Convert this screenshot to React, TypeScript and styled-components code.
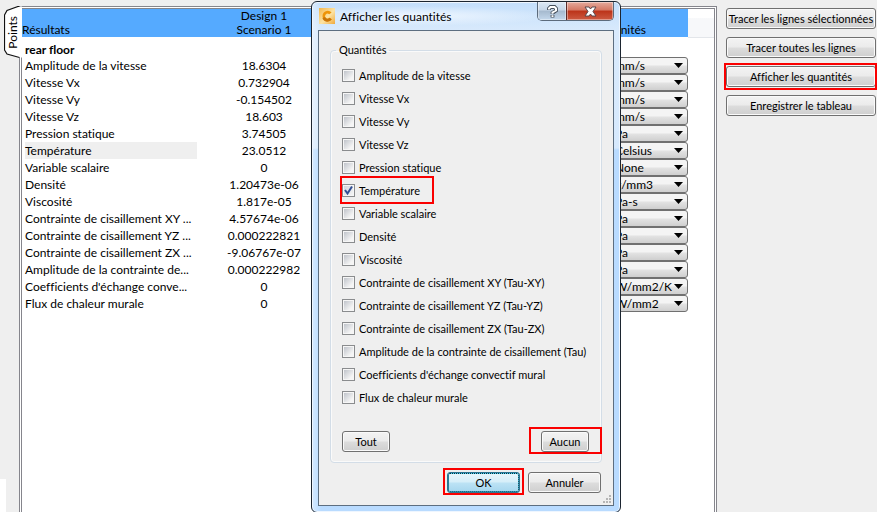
import React from "react";
import styled, { createGlobalStyle, css } from "styled-components";

const GlobalStyle = createGlobalStyle`
  * { box-sizing: border-box; }
  body {
    margin: 0;
    background: #efefef;
    color: #000;
    font-family: Lato, "Liberation Sans", sans-serif;
    font-size: 11px;
    font-variant-ligatures: none;
  }
`;

const Page = styled.div`
  position: relative;
  display: flex;
  min-height: 100vh;
  overflow: hidden;
`;

/* Left rail with the vertical tab */
const Rail = styled.div`
  display: flex;
  flex-direction: column;
  width: 19px;
  flex: none;
  padding-top: 6px;
`;

const Tab = styled.button`
  position: relative;
  z-index: 1;
  display: flex;
  align-items: center;
  justify-content: center;
  width: 18px;
  height: 53px;
  margin-left: 4px;
  padding: 0;
  border: 0;
  background: none;
  font: inherit;
  color: inherit;
`;

const TabShape = styled.svg`
  position: absolute;
  inset: 0;
`;

const TabLabel = styled.span`
  position: relative;
  writing-mode: vertical-rl;
  transform: rotate(180deg);
  font-size: 12px;
  line-height: 16px;
`;

const RailFoot = styled.div`
  width: 6px;
  height: 33px;
  margin-top: auto;
  background: #fff;
`;

/* Results panel */
const Panel = styled.main`
  flex: 1;
  min-width: 0;
  margin-top: 6px;
  padding: 1px 1px 0;
  border: 1px solid #85858c;
  border-bottom: 0;
  background: #fff;
`;

const PanelInner = styled.div`
  height: 100%;
  border: 1px solid #85858c;
  border-bottom: 0;
`;

const Results = styled.table`
  width: 100%;
  table-layout: fixed;
  border-collapse: collapse;
  font-size: 12px;
  line-height: 14px;
`;

const Col = styled.col<{ $w?: number }>`
  ${(p) => p.$w && css`width: ${p.$w}px;`}
`;

const Head = styled.th<{ $center?: boolean }>`
  height: 28px;
  padding: 0;
  background: #55aaff;
  font-weight: 400;
  vertical-align: bottom;
  text-align: ${(p) => (p.$center ? "center" : "left")};
`;

const HeadLine = styled.span`
  display: block;
  height: 14px;
  overflow: hidden;
`;

const HeadRest = styled(Head)`
  background: linear-gradient(#fff 0 33%, #f7f8fa 34%);
  border-bottom: 1px solid #e3e6ea;
`;

const GroupName = styled.th`
  height: 20px;
  padding: 5px 0 0 3px;
  font-weight: 700;
  text-align: left;
`;

const Name = styled.th<{ $active?: boolean }>`
  height: 17px;
  padding: 0;
  font-weight: 400;
  text-align: left;
  ${(p) => p.$active && css`
    background: linear-gradient(#efefef, #efefef) 3px 0 / 172px 100% no-repeat;
  `}
`;

const NameText = styled.span`
  display: block;
  padding-left: 3px;
  white-space: nowrap;
`;

const Value = styled.td`
  padding: 0;
  text-align: center;
`;

const Cell = styled.td`
  padding: 0;
`;

const UnitBox = styled.div`
  position: relative;
  display: flex;
  align-items: center;
  height: 17px;
  border: 1px solid #707070;
  border-radius: 3px;
  background: linear-gradient(#f4f4f4 0 45%, #e2e2e2 55%, #cfcfcf);
`;

const UnitSelect = styled.select`
  appearance: none;
  width: 100%;
  height: 15px;
  padding: 0 0 0 2px;
  border: 0;
  background: none;
  color: #000;
  font: inherit;
  line-height: 15px;
`;

const Arrow = styled.svg`
  position: absolute;
  right: 4px;
  top: 5px;
  pointer-events: none;
`;

/* Right column */
const Side = styled.aside`
  display: flex;
  flex-direction: column;
  gap: 8px;
  width: 160px;
  flex: none;
  padding: 8px 1px 0 9px;
`;

const Button = styled.button<{ $w?: number; $primary?: boolean }>`
  height: 21px;
  width: ${(p) => (p.$w ? p.$w + "px" : "100%")};
  padding: 0 0 1px;
  border: 1px solid #707070;
  border-radius: 3px;
  background: linear-gradient(#f3f3f3 0, #ebebeb 49%, #dddddd 51%, #cfcfcf);
  box-shadow: inset 0 0 0 1px #fafafa;
  color: #000;
  font: inherit;
  white-space: nowrap;
  ${(p) => p.$primary && css`
    border-color: #2f7390;
    background: linear-gradient(#eaf6fb 0, #d5eef9 49%, #bde3f5 51%, #a6d6ee);
    box-shadow: inset 0 0 0 1px #45d0f5;
    outline: 1px dotted #10303c;
    outline-offset: -2px;
  `}
`;

/* Red frame laid over a control; $i holds the reach past each side */
const Marked = styled.div<{ $i: string }>`
  position: relative;
  display: flex;
  &::after {
    content: "";
    position: absolute;
    inset: ${(p) => p.$i};
    border: 2px solid #fa0000;
    pointer-events: none;
  }
`;

/* Dialog window */
const Dialog = styled.section`
  position: absolute;
  z-index: 2;
  top: 1px;
  left: 311px;
  width: 310px;
  display: flex;
  flex-direction: column;
  padding: 0 6px 6px;
  border: 1px solid #1c2530;
  border-radius: 6px;
  background: linear-gradient(90deg, #ffffff66, #ffffff00 3%), linear-gradient(#c4dffb 0, #d9eafc 30px, #d6e9fd 146px, #b9dbff 148px);
  box-shadow: inset 0 0 0 1px #eef6ff;
`;

const TitleBar = styled.header`
  display: flex;
  align-items: center;
  gap: 5px;
  height: 28px;
  padding-left: 1px;
  background: radial-gradient(ellipse at 34% 50%, #eef6ff, #eef6ff00 50%);
`;

const Title = styled.h1`
  flex: 1;
  margin: 0;
  font-size: 12px;
  font-weight: 400;
`;

const WindowButtons = styled.div`
  display: flex;
  align-self: flex-start;
  height: 19px;
  border: 1px solid #5c6b7c;
  border-top: 0;
  border-radius: 0 0 5px 5px;
  overflow: hidden;
`;

const WindowButton = styled.button<{ $close?: boolean }>`
  display: flex;
  align-items: center;
  justify-content: center;
  width: ${(p) => (p.$close ? 47 : 28)}px;
  padding: 0;
  border: 0;
  border-left: ${(p) => (p.$close ? "1px solid #5b2a28" : "0")};
  background: ${(p) =>
    p.$close
      ? "linear-gradient(#e5aa9c 0, #d47763 45%, #bc3319 50%, #cc5a41 100%)"
      : "linear-gradient(#dce8f4 0, #c6d6e7 45%, #a5b9ce 50%, #c4d8ec 100%)"};
  box-shadow: inset 0 0 0 1px #ffffff66;
`;

const Client = styled.div`
  position: relative;
  display: flex;
  flex-direction: column;
  padding: 12px 11px 0;
  border: 1px solid #5d6e80;
  background: #efefef;
`;

const Group = styled.fieldset`
  min-width: 0;
  margin: 0;
  padding: 7px 12px 10px 11px;
  border: 1px solid #d3dde7;
  border-radius: 4px;
  box-shadow: inset 0 0 0 1px #fafafa;
`;

const Legend = styled.legend`
  margin-left: -6px;
  padding: 0 3px;
  line-height: 14px;
`;

const Check = styled.label`
  display: flex;
  align-items: center;
  gap: 4px;
  height: 23px;
  white-space: nowrap;
`;

const Box = styled.input`
  appearance: none;
  width: 13px;
  height: 13px;
  margin: 0;
  border: 1px solid #8a8c8e;
  background: linear-gradient(135deg, #c0c4cb, #f5f5f5 80%) content-box, #f6f6f6;
  padding: 1px;
  &:checked {
    background: url("data:image/svg+xml,%3Csvg xmlns='http://www.w3.org/2000/svg' viewBox='0 0 11 11'%3E%3Cpath d='M2 5l2.500 3.500L9 1.500' fill='none' stroke='%23324f94' stroke-width='2'/%3E%3C/svg%3E"),
      linear-gradient(135deg, #d2d6dd, #f5f5f5) content-box, #f6f6f6;
  }
`;

const GroupActions = styled.div`
  display: flex;
  justify-content: space-between;
  margin-top: 22px;
`;

const Footer = styled.footer`
  display: flex;
  justify-content: flex-end;
  gap: 8px;
  padding: 9px 1px 12px 0;
`;

const Grip = styled.svg`
  position: absolute;
  right: 2px;
  bottom: 2px;
`;

const rows: [string, string, string][] = [
  ["Amplitude de la vitesse", "18.6304", "mm/s"],
  ["Vitesse Vx", "0.732904", "mm/s"],
  ["Vitesse Vy", "-0.154502", "mm/s"],
  ["Vitesse Vz", "18.603", "mm/s"],
  ["Pression statique", "3.74505", "Pa"],
  ["Température", "23.0512", "Celsius"],
  ["Variable scalaire", "0", "None"],
  ["Densité", "1.20473e-06", "g/mm3"],
  ["Viscosité", "1.817e-05", "Pa-s"],
  ["Contrainte de cisaillement XY ...", "4.57674e-06", "Pa"],
  ["Contrainte de cisaillement YZ ...", "0.000222821", "Pa"],
  ["Contrainte de cisaillement ZX ...", "-9.06767e-07", "Pa"],
  ["Amplitude de la contrainte de...", "0.000222982", "Pa"],
  ["Coefficients d'échange conve...", "0", "W/mm2/K"],
  ["Flux de chaleur murale", "0", "W/mm2"],
];

const quantities = [
  "Amplitude de la vitesse",
  "Vitesse Vx",
  "Vitesse Vy",
  "Vitesse Vz",
  "Pression statique",
  "Température",
  "Variable scalaire",
  "Densité",
  "Viscosité",
  "Contrainte de cisaillement XY (Tau-XY)",
  "Contrainte de cisaillement YZ (Tau-YZ)",
  "Contrainte de cisaillement ZX (Tau-ZX)",
  "Amplitude de la contrainte de cisaillement (Tau)",
  "Coefficients d'échange convectif mural",
  "Flux de chaleur murale",
];

function QuantityCheck({ name }: { name: string }) {
  const check = (
    <Check>
      <Box type="checkbox" defaultChecked={name === "Température"} />
      {name}
    </Check>
  );
  return name === "Température" ? <Marked $i="-3px 155px -2px -2px">{check}</Marked> : check;
}

function QuantitiesDialog() {
  return (
    <Dialog role="dialog" aria-labelledby="dialog-title">
      <TitleBar>
        <svg width="16" height="16" viewBox="0 0 16 16" aria-hidden="true">
          <defs>
            <linearGradient id="tile" x1="0" y1="0" x2="1" y2="1">
              <stop offset="0" stopColor="#f3b64c" />
              <stop offset=".55" stopColor="#fce3a4" />
              <stop offset="1" stopColor="#f0a93a" />
            </linearGradient>
          </defs>
          <rect width="16" height="16" fill="url(#tile)" />
          <path d="M12.6 4.6A5.2 5.2 0 1 0 12.8 11.2L10.4 9.8A2.5 2.5 0 1 1 10.2 6.2z" fill="#ee9408" />
          <path d="M3.4 10A5.2 5.2 0 0 0 12.8 11.2L10.4 9.8A2.6 2.6 0 0 1 6 9z" fill="#c97508" />
        </svg>
        <Title id="dialog-title">Afficher les quantités</Title>
        <WindowButtons>
          <WindowButton aria-label="Aide">
            <svg width="11" height="13" viewBox="0 0 11 13" fill="none">
              <path d="M2 5V3.500L3.500 2h4L9 3.500v2L5.500 8v1M5.500 10v2.500" stroke="#46505c" strokeWidth="3.800" />
              <path d="M2 4.500V3.500L3.500 2h4L9 3.500v2L5.500 7.500v1.300M5.500 10.200v1.800" stroke="#fff" strokeWidth="2" />
            </svg>
          </WindowButton>
          <WindowButton $close aria-label="Fermer">
            <svg width="13" height="11" viewBox="0 0 13 11">
              <path d="M1 1h4l1.500 2L8 1h4L9 5.500 12 10H8L6.500 8 5 10H1l3-4.500z" fill="#fff" stroke="#59474b" />
            </svg>
          </WindowButton>
        </WindowButtons>
      </TitleBar>
      <Client>
        <Group>
          <Legend>Quantités</Legend>
          {quantities.map((q) => (
            <QuantityCheck key={q} name={q} />
          ))}
          <GroupActions>
            <Button $w={48}>Tout</Button>
            <Marked $i="-4px -13px -2px -12px">
              <Button $w={48}>Aucun</Button>
            </Marked>
          </GroupActions>
        </Group>
        <Footer>
          <Marked $i="-4px -4px -2px -4px">
            <Button $w={73} $primary>OK</Button>
          </Marked>
          <Button $w={73}>Annuler</Button>
        </Footer>
        <Grip width="8" height="8" viewBox="0 0 8 8" fill="#b5b5b5" aria-hidden="true">
          <path d="M6 0h2v2H6zM3 3h2v2H3zM6 3h2v2H6zM0 6h2v2H0zM3 6h2v2H3zM6 6h2v2H6z" />
        </Grip>
      </Client>
    </Dialog>
  );
}

export default function App() {
  return (
    <>
      <GlobalStyle />
      <Page>
        <Rail>
          <Tab>
            <TabShape width="18" height="53" viewBox="0 0 18 53" aria-hidden="true">
              <path d="M18 .5H14L3 4.500L.5 9V44L3 48L15.500 51.500H18z" fill="#fff" />
              <path d="M15.500 .5H14L3 4.500L.5 9V44L3 48L15.500 51.500" fill="none" stroke="#111" strokeWidth="1.200" />
            </TabShape>
            <TabLabel>Points</TabLabel>
          </Tab>
          <RailFoot />
        </Rail>
        <Panel>
          <PanelInner>
            <Results>
              <colgroup>
                <Col $w={178} />
                <Col $w={128} />
                <Col $w={284} />
                <Col $w={76} />
                <Col />
              </colgroup>
              <thead>
                <tr>
                  <Head>Résultats</Head>
                  <Head $center>
                    <HeadLine>Design 1</HeadLine>
                    <HeadLine>Scenario 1</HeadLine>
                  </Head>
                  <Head />
                  <Head>Unités</Head>
                  <HeadRest />
                </tr>
              </thead>
              <tbody>
                <tr>
                  <GroupName colSpan={5}>rear floor</GroupName>
                </tr>
                {rows.map(([name, value, unit]) => (
                  <tr key={name}>
                    <Name scope="row" $active={name === "Température"}>
                      <NameText>{name}</NameText>
                    </Name>
                    <Value>{value}</Value>
                    <Cell />
                    <Cell>
                      <UnitBox>
                        <UnitSelect aria-label={`Unité : ${name}`}>
                          <option>{unit}</option>
                        </UnitSelect>
                        <Arrow width="9" height="5" viewBox="0 0 9 5" aria-hidden="true">
                          <path d="M0 0h9L4.500 5z" />
                        </Arrow>
                      </UnitBox>
                    </Cell>
                    <Cell />
                  </tr>
                ))}
              </tbody>
            </Results>
          </PanelInner>
        </Panel>
        <Side>
          <Button>Tracer les lignes sélectionnées</Button>
          <Button>Tracer toutes les lignes</Button>
          <Marked $i="-3px -1px -3px -2px">
            <Button>Afficher les quantités</Button>
          </Marked>
          <Button>Enregistrer le tableau</Button>
        </Side>
        <QuantitiesDialog />
      </Page>
    </>
  );
}
